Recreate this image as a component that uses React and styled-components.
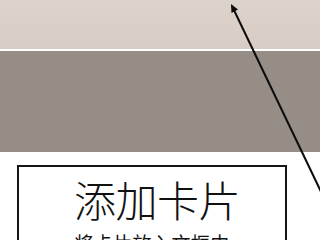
import styled, { createGlobalStyle } from 'styled-components';

const Global = createGlobalStyle`
    html, body {
        margin: 0;
        padding: 0;
        background: #ffffff;
        overflow: hidden;
    }
    body {
        font-family: "Noto Sans CJK SC", "Noto Sans", sans-serif;
    }
`

const Screen = styled.div`
    position: relative;
    width: 320px;
    height: 240px;
    overflow: hidden;
    background: #ffffff;
`

const Band = styled.div`
    height: ${props => props.$h}px;
    background: ${props => props.$bg};
    border-bottom: ${props => props.$line ? '2px solid #ffffff' : 'none'};
`

const Body = styled.div`
    padding: 13px 0 0 17px;
`

const Card = styled.div`
    width: 266px;
    height: 120px;
    border: 2px solid #141414;
    display: flex;
    flex-direction: column;
    align-items: center;
    padding-top: 11px;
`

const Title = styled.h1`
    margin: 0 0 0 10px;
    font-size: 42px;
    line-height: 1;
    font-weight: 300;
    color: #111111;
    letter-spacing: -0.5px;
`

const Subtitle = styled.p`
    margin: 13px 0 0 0;
    font-size: 19px;
    line-height: 1;
    color: #111111;
    letter-spacing: 0.4px;
`

const Pointer = styled.svg`
    position: absolute;
    left: 0;
    top: 0;
    width: 320px;
    height: 240px;
    pointer-events: none;
`

const App = () => {
    return (
        <Screen>
            <Global />
            <Band $h={49} $bg="linear-gradient(180deg, #dcd3ca 0%, #d7cdc4 100%)" $line />
            <Band $h={101} $bg="#968d86" />
            <Body>
                <Card>
                    <Title>添加卡片</Title>
                    <Subtitle>将卡片放入文框中</Subtitle>
                </Card>
            </Body>
            <Pointer viewBox="0 0 320 240">
                <line x1="232" y1="6" x2="324" y2="198" stroke="#0c0c0c" strokeWidth="2" />
                <polygon points="231,4 231.5,13 238,9.5" fill="#0c0c0c" />
            </Pointer>
        </Screen>
    )
}

export default App
